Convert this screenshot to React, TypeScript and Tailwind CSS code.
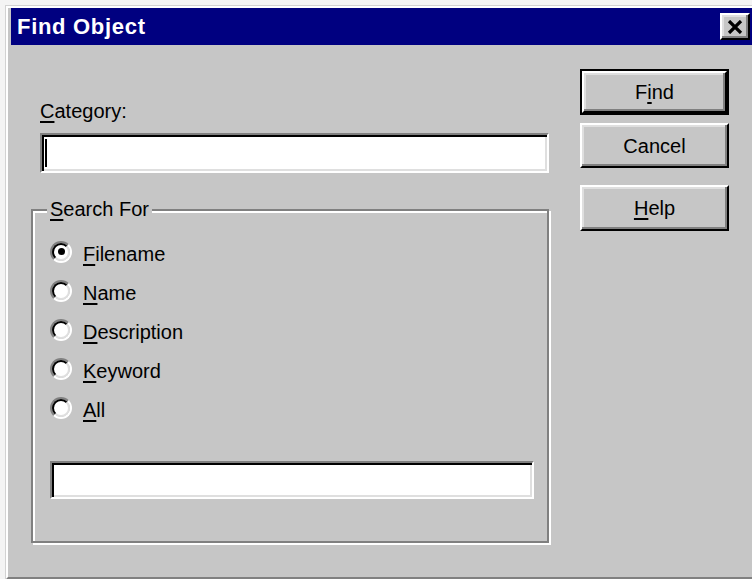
import React from "react"

// underlined access-key letter
function Key({ children }: { children: React.ReactNode }) {
    return <span className="underline decoration-2 underline-offset-[3px]">{children}</span>
}

function Field({ className = "", cursor = false }: { className?: string; cursor?: boolean }) {
    return (
        <div className={`bg-white border-2 border-t-[#808080] border-l-[#808080] border-b-white border-r-white shadow-[inset_2px_2px_0_#000,inset_-2px_-2px_0_#dfdfdf] flex items-center ${className}`}>
            {cursor && <span className="ml-[3px] w-[2px] h-[28px] bg-black"></span>}
        </div>
    )
}

function Button({ children, isDefault = false, className = "" }: { children: React.ReactNode; isDefault?: boolean; className?: string }) {
    const face = (
        <div className="flex-1 flex items-center justify-center border-2 border-t-white border-l-white border-r-black border-b-black shadow-[inset_-2px_-2px_0_#808080,inset_2px_2px_0_#dfdfdf] text-[20px] text-black">
            {children}
        </div>
    )
    return isDefault ? (
        <div className={`flex border-2 border-black ${className}`}>{face}</div>
    ) : (
        <div className={`flex ${className}`}>{face}</div>
    )
}

function Radio({ label, checked = false }: { label: React.ReactNode; checked?: boolean }) {
    return (
        <div className="h-[39px] flex items-center">
            <div className="w-[22px] h-[22px] rounded-full border-2 border-t-[#808080] border-l-[#808080] border-b-white border-r-white">
                <div className="w-full h-full rounded-full bg-white border-2 border-t-black border-l-black border-b-[#dfdfdf] border-r-[#dfdfdf] flex items-center justify-center">
                    {checked && <span className="w-[7px] h-[7px] rounded-full bg-black"></span>}
                </div>
            </div>
            <span className="ml-[11px] pt-[4px] text-[20px] leading-6">{label}</span>
        </div>
    )
}

export default function App() {
    return (
        <div className="w-[752px] h-[579px] bg-[#f4f4f4] pt-[5px] pl-[5px] flex font-['Liberation_Sans',Arial,sans-serif] text-black overflow-hidden">
            <div className="flex-1 flex border-t border-l border-[#d2d2d2]">
                <div className="flex-1 flex flex-col bg-[#c6c6c6] border-t-2 border-l-2 border-white border-b-2 border-b-[#808080] pl-[3px]">
                    {/* Title bar */}
                    <div className="h-[37px] bg-[#000080] flex items-center justify-between pl-[6px] pr-[2px]">
                        <span className="text-white font-bold text-[22px] tracking-[0.7px]">Find Object</span>
                        <div className="w-[30px] h-[27px] bg-[#c6c6c6] border-2 border-t-white border-l-white border-r-black border-b-black shadow-[inset_-2px_-2px_0_#808080,inset_2px_2px_0_#dfdfdf] flex items-center justify-center">
                            <svg width="16" height="14" viewBox="0 0 16 14">
                                <path d="M2 1 L14 13 M14 1 L2 13" stroke="#000" strokeWidth="3.2" />
                            </svg>
                        </div>
                    </div>

                    {/* Body */}
                    <div className="flex-1 flex pl-[20px]">
                        <div className="w-[518px] flex flex-col">
                            <div className="ml-[9px] mt-[54px] text-[20px] leading-6">
                                <Key>C</Key>ategory:
                            </div>
                            <Field className="ml-[9px] mt-[10px] w-[509px] h-[40px]" cursor />

                            {/* Search For group */}
                            <div className="relative mt-[36px] w-[518px] border-2 border-[#808080] shadow-[2px_2px_0_#fff,inset_2px_2px_0_#fff] pl-[17px] pt-[21px] pb-[42px]">
                                <span className="absolute top-[-14px] left-[14px] px-[3px] bg-[#c6c6c6] text-[20px] leading-6">
                                    <Key>S</Key>earch For
                                </span>
                                <Radio label={<><Key>F</Key>ilename</>} checked />
                                <Radio label={<><Key>N</Key>ame</>} />
                                <Radio label={<><Key>D</Key>escription</>} />
                                <Radio label={<><Key>K</Key>eyword</>} />
                                <Radio label={<><Key>A</Key>ll</>} />
                                <Field className="mt-[34px] w-[484px] h-[38px]" />
                            </div>
                        </div>

                        {/* Command buttons */}
                        <div className="ml-[31px] mt-[24px] flex flex-col">
                            <Button isDefault className="w-[149px] h-[46px]">F<Key>i</Key>nd</Button>
                            <Button className="mt-[8px] w-[149px] h-[45px]">Cancel</Button>
                            <Button className="mt-[17px] w-[149px] h-[46px]"><Key>H</Key>elp</Button>
                        </div>
                    </div>
                </div>
            </div>
        </div>
    )
}
